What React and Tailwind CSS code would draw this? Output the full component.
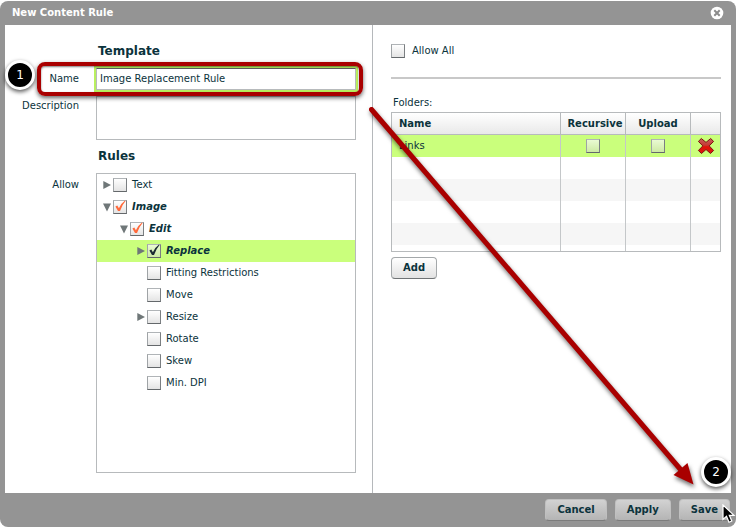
import React, { useState } from 'react';
import clsx from 'clsx';

const initialRules = [
  { id: 'text', label: 'Text', level: 0, arrow: 'closed' },
  { id: 'image', label: 'Image', level: 0, arrow: 'open', checked: true, partial: true },
  { id: 'edit', label: 'Edit', level: 1, arrow: 'open', checked: true, partial: true },
  { id: 'replace', label: 'Replace', level: 2, arrow: 'closed', checked: true, selected: true },
  { id: 'fitting', label: 'Fitting Restrictions', level: 2 },
  { id: 'move', label: 'Move', level: 2 },
  { id: 'resize', label: 'Resize', level: 2, arrow: 'closed' },
  { id: 'rotate', label: 'Rotate', level: 2 },
  { id: 'skew', label: 'Skew', level: 2 },
  { id: 'dpi', label: 'Min. DPI', level: 2 },
];

const indents = ['pl-1.5', 'pl-[23px]', 'pl-[40px]'];

// Square checkbox with a tick drawn on top
const Checkbox = ({ id, checked, onChange, partial, tinted, label }) => (
  <span className="relative block size-3.5 shrink-0">
    <input
      type="checkbox"
      id={id}
      aria-label={label}
      checked={checked}
      onChange={onChange}
      className={clsx(
        'block size-3.5 appearance-none border border-t-[#b0b4b7] border-l-[#9fa3a6] border-r-[#7b7f82] border-b-[#64686b] bg-linear-to-b',
        tinted ? 'from-[#eafad3] to-[#cdeaa3]' : 'from-white to-[#e4e4e4]'
      )}
    />
    {checked && (
      <svg viewBox="0 0 14 14" className="pointer-events-none absolute inset-0 size-3.5">
        <path
          d="M2.4 6.4 L4.3 5.5 L5.9 8.2 Q7.800 3.600 12 0.500 L12.600 1.100 Q9 5 7 11 L5 11 Z"
          fill={partial ? '#ff6a3c' : '#1d2b33'}
        />
      </svg>
    )}
  </span>
);

const Arrow = ({ type }) => (
  <svg viewBox="0 0 8 10" className="h-2.5 w-2 shrink-0" fill="#6f7778">
    {type === 'closed' && <path d="M0.3 1 L8 5 L0.3 9 Z" />}
    {type === 'open' && <path d="M0 1.5 H8 L4 9.5 Z" />}
  </svg>
);

// Numbered step marker
const Badge = ({ children, className }) => (
  <span
    className={clsx(
      'absolute z-20 flex size-[30px] items-center justify-center rounded-full border-3 border-white bg-black text-xs text-white shadow-[0_2px_4px_rgba(0,0,0,0.65)]',
      className
    )}
  >
    {children}
  </span>
);

const Button = ({ children, className }) => (
  <button
    type="button"
    className={clsx(
      'h-[22px] rounded border px-[11px] text-[10px] font-bold text-[#0b333c]',
      className
    )}
  >
    {children}
  </button>
);

const footerButton =
  'border-[#c0c0c0] border-b-[#7c7c7c] bg-linear-to-b from-[#d2d2d2] to-[#b4b4b4]';

const App = () => {
  const [name, setName] = useState('Image Replacement Rule');
  const [description, setDescription] = useState('');
  const [rules, setRules] = useState(initialRules);
  const [allowAll, setAllowAll] = useState(false);
  const [folder, setFolder] = useState({ recursive: false, upload: false });

  const toggleRule = (id) => {
    setRules((prev) => prev.map((r) => (r.id === id ? { ...r, checked: !r.checked } : r)));
  };

  return (
    <div className="bg-white pt-px pr-px font-['DejaVu_Sans',Verdana,sans-serif] text-[10px] leading-[14px] text-[#0b333c]">
      <div className="relative rounded-lg bg-[#949494]">
        {/* Title bar */}
        <header className="flex h-6 items-center justify-between px-3">
          <h1 className="font-bold text-white">New Content Rule</h1>
          <button type="button" aria-label="Close">
            <svg viewBox="0 0 14 14" className="size-3.5">
              <circle cx="7" cy="7" r="6.3" fill="#fff" />
              <path d="M4.3 4.3 L9.7 9.7 M9.7 4.3 L4.3 9.7" stroke="#8c8c8c" strokeWidth="2" />
            </svg>
          </button>
        </header>

        <main className="relative mx-[5px] grid grid-cols-[368fr_358fr] bg-white">
          {/* Template and rules */}
          <section className="grid grid-cols-[74px_1fr] content-start gap-x-[17px] border-r border-[#b5b8bb] pt-4 pr-4 pb-5">
            <h2 className="col-start-2 pl-0.5 text-xs leading-5 font-bold">Template</h2>

            <div className="relative col-span-2 mt-[7px] grid grid-cols-subgrid items-center">
              <label htmlFor="name" className="text-right">Name</label>
              <input
                id="name"
                type="text"
                value={name}
                onChange={(e) => setName(e.target.value)}
                className="h-[22px] w-full border border-[#b7babc] border-t-[#5c5f62] px-[3px] pb-0.5 outline-2 outline-[#b9f05f]"
              />
              <div className="pointer-events-none absolute -inset-y-1.5 -right-[7px] left-8 z-10 rounded-lg border-4 border-[#a90000] shadow-[0_2px_4px_rgba(0,0,0,0.6),inset_0_1px_2px_rgba(0,0,0,0.5)]" />
              <Badge className="-top-2 left-0">1</Badge>
            </div>

            <label htmlFor="description" className="mt-1.5 pt-[3px] text-right">Description</label>
            <textarea
              id="description"
              value={description}
              onChange={(e) => setDescription(e.target.value)}
              className="mt-1.5 block h-11 w-full resize-none border border-[#b7babc] px-[3px]"
            />

            <h2 className="col-start-2 mt-1.5 pl-0.5 text-xs leading-5 font-bold">Rules</h2>

            <span className="mt-[7px] pt-[5px] text-right">Allow</span>
            <ul className="mt-[7px] min-h-[300px] border border-[#b7babc]">
              {rules.map((rule) => (
                <li
                  key={rule.id}
                  className={clsx(
                    'flex h-[22px] items-center',
                    indents[rule.level],
                    rule.selected && 'bg-[#caff7c]'
                  )}
                >
                  <Arrow type={rule.arrow} />
                  <span className="w-0.5" />
                  <Checkbox
                    id={rule.id}
                    checked={!!rule.checked}
                    partial={rule.partial}
                    tinted={rule.selected}
                    onChange={() => toggleRule(rule.id)}
                  />
                  <label htmlFor={rule.id} className={clsx('pl-[5px]', rule.checked && 'font-bold italic')}>
                    {rule.label}
                  </label>
                </li>
              ))}
            </ul>
          </section>

          {/* Folders */}
          <section className="pt-[19px] pr-2.5 pl-[18px]">
            <div className="flex items-center gap-[7px]">
              <Checkbox id="allow-all" checked={allowAll} onChange={() => setAllowAll(!allowAll)} />
              <label htmlFor="allow-all">Allow All</label>
            </div>
            <hr className="mt-[19px] border-t-2 border-[#c8c8c8]" />

            <h3 className="mt-[17px] pl-0.5">Folders:</h3>
            <div className="mt-0.5 border border-[#b7babc]">
              <table className="w-full table-fixed border-separate border-spacing-0">
                <thead>
                  <tr className="h-[22px] bg-linear-to-b from-white to-[#e8e8e8]">
                    <th className="border-b border-[#b7babc] p-0 pl-[7px] text-left">Name</th>
                    <th className="w-[65px] border-b border-l border-[#b7babc] p-0 pl-1">Recursive</th>
                    <th className="w-[65px] border-b border-l border-[#b7babc] p-0">Upload</th>
                    <th className="w-[30px] border-b border-l border-[#b7babc] p-0" />
                  </tr>
                </thead>
                <tbody>
                  <tr className="h-[22px] bg-[#caff7c]">
                    <td className="p-0 pl-[7px]">Links</td>
                    <td className="border-l border-[#c4c7c9] p-0">
                      <div className="flex justify-center">
                        <Checkbox
                          label="Recursive"
                          tinted
                          checked={folder.recursive}
                          onChange={() => setFolder({ ...folder, recursive: !folder.recursive })}
                        />
                      </div>
                    </td>
                    <td className="border-l border-[#c4c7c9] p-0">
                      <div className="flex justify-center">
                        <Checkbox
                          label="Upload"
                          tinted
                          checked={folder.upload}
                          onChange={() => setFolder({ ...folder, upload: !folder.upload })}
                        />
                      </div>
                    </td>
                    <td className="border-l border-[#c4c7c9] p-0">
                      <button type="button" aria-label="Remove folder" className="mx-auto block">
                        <svg viewBox="0 0 18 18" className="size-[18px]">
                          <defs>
                            <linearGradient id="cross" x1="0" y1="0" x2="0" y2="1">
                              <stop offset="0" stopColor="#c9605c" />
                              <stop offset="0.45" stopColor="#c43a34" />
                              <stop offset="0.55" stopColor="#e01208" />
                              <stop offset="1" stopColor="#d8190f" />
                            </linearGradient>
                          </defs>
                          <path
                            d="M4.300 1.500 L9 5.400 L13.700 1.500 L16.600 4.400 L12.200 8.900 L16.600 13.500 L13.500 16.500 L9 12.500 L4.500 16.500 L1.400 13.500 L5.800 8.900 L1.400 4.400 Z"
                            fill="url(#cross)"
                            stroke="#7c130f"
                            strokeLinejoin="round"
                          />
                        </svg>
                      </button>
                    </td>
                  </tr>
                  {[0, 1, 2, 3].map((row) => (
                    <tr key={row} className={clsx('h-[22px]', row % 2 === 1 && 'bg-[#f6f6f6]')}>
                      <td className="p-0" />
                      <td className="border-l border-[#c4c7c9] p-0" />
                      <td className="border-l border-[#c4c7c9] p-0" />
                      <td className="border-l border-[#c4c7c9] p-0" />
                    </tr>
                  ))}
                  <tr className="h-1.5">
                    <td className="p-0" />
                    <td className="border-l border-[#c4c7c9] p-0" />
                    <td className="border-l border-[#c4c7c9] p-0" />
                    <td className="border-l border-[#c4c7c9] p-0" />
                  </tr>
                </tbody>
              </table>
            </div>
            <Button className="mt-[5px] border-[#a4a8aa] border-b-[#6f7375] bg-linear-to-b from-white to-[#e2e2e2]">
              Add
            </Button>
          </section>

          {/* Arrow pointing at the Save button */}
          <svg
            viewBox="0 0 340 396"
            className="pointer-events-none absolute right-[30px] bottom-0 z-10 h-[396px] w-[340px] drop-shadow-[1px_3px_2px_rgba(0,0,0,0.55)]"
          >
            <path d="M10.5 12.5 L320 373" stroke="#a90000" strokeWidth="5" strokeLinecap="round" />
            <path d="M332.500 387.500 L312.500 378 L326.500 366 Z" fill="#a90000" />
          </svg>
          <Badge className="right-0 bottom-1.5">2</Badge>
        </main>

        {/* Actions */}
        <footer className="flex h-[34px] justify-end gap-2 pt-1.5 pr-1.5">
          <Button className={footerButton}>Cancel</Button>
          <Button className={footerButton}>Apply</Button>
          <Button className={footerButton}>Save</Button>
        </footer>

        {/* Mouse pointer */}
        <svg viewBox="0 0 14 20" className="pointer-events-none absolute right-0 bottom-[3px] z-20 h-5 w-3.5">
          <path
            d="M1 1 V15.5 L4.5 12.3 L7 18.2 L9.8 17 L7.3 11.3 H12 Z"
            fill="#000"
            stroke="#fff"
            strokeWidth="1.2"
          />
        </svg>
      </div>
    </div>
  );
};

export default App;
